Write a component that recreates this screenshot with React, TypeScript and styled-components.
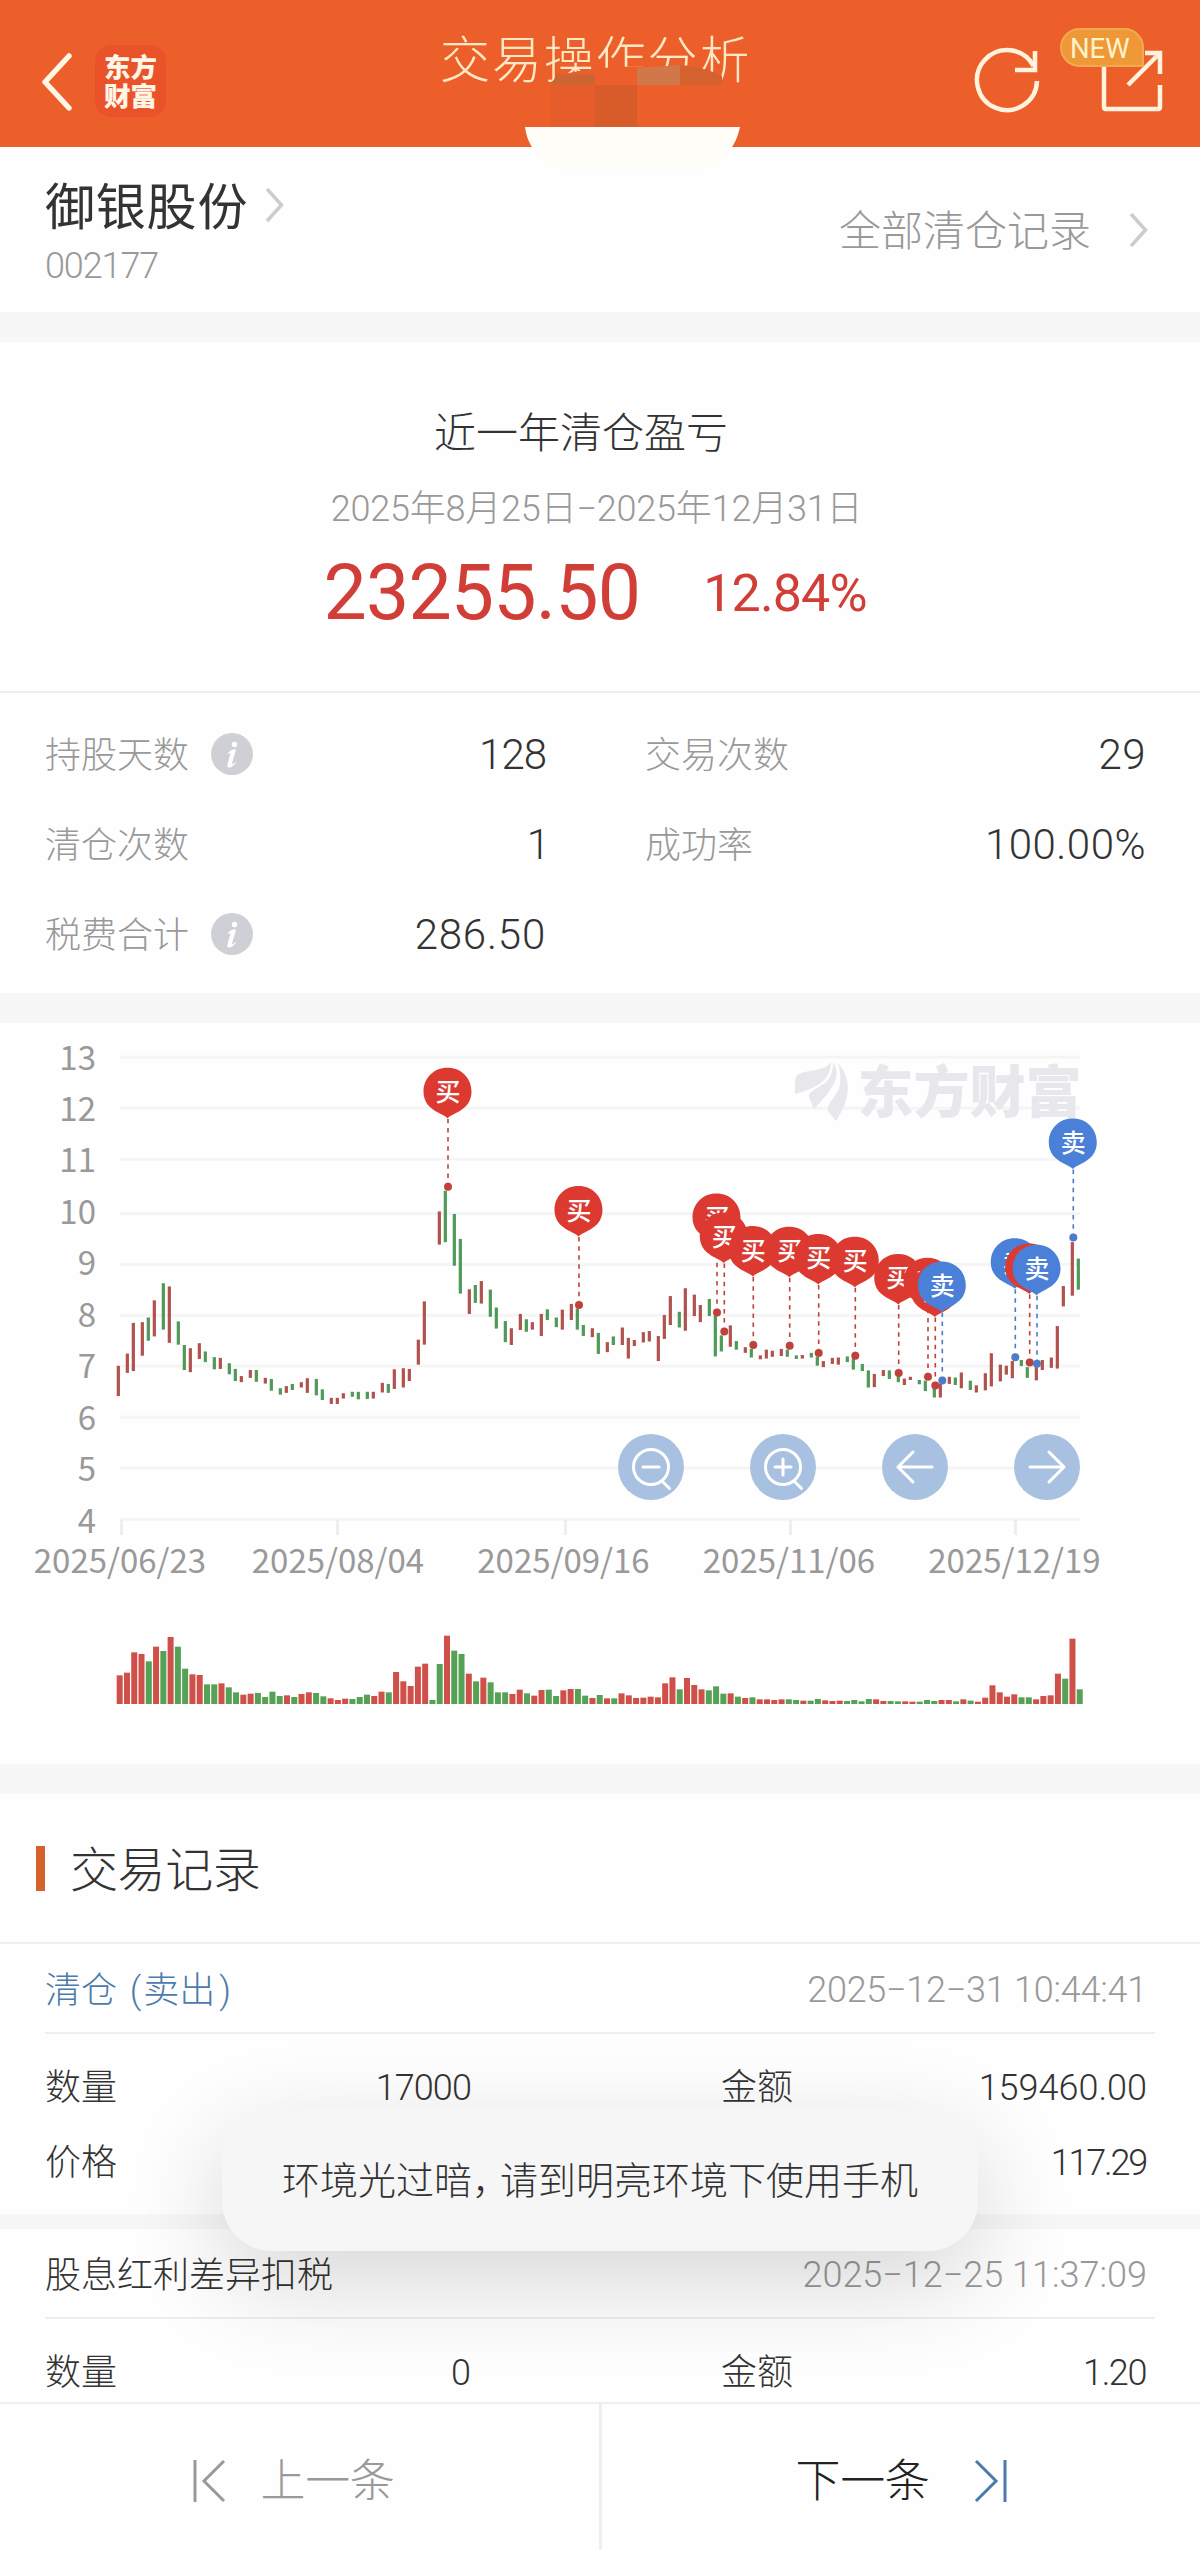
import React from "react";
import styled, { createGlobalStyle, css } from "styled-components";

const GlobalStyle = createGlobalStyle`
  * { box-sizing: border-box; }
  body { margin: 0; background: #fff; }
`;

const sans = `Roboto, "Noto Sans CJK SC Light", "Noto Sans CJK SC", sans-serif`;
const cjk = `"Noto Sans CJK SC", sans-serif`;

const Page = styled.div`
  position: relative;
  width: 1200px;
  height: 2550px;
  overflow: hidden;
  background: #fefefe;
  color: #333;
  font-family: ${sans};
  font-weight: 300;
  line-height: 1;
  white-space: nowrap;
  display: flex;
  flex-direction: column;
`;

/* ---------- header ---------- */

const Header = styled.header`
  position: relative;
  height: 147px;
  flex: none;
  background: #ec5f2b;
  display: flex;
  justify-content: space-between;
  padding: 45px 35px 0 40px;
`;

const HeaderLeft = styled.div`
  display: flex;
  align-items: center;
  height: 72px;
  gap: 20px;
`;

const HeaderRight = styled.div`
  position: relative;
  display: flex;
  gap: 57px;
`;

const Logo = styled.div`
  width: 71px;
  height: 72px;
  border-radius: 16px;
  background: #ea532a;
  color: #fff6e6;
  font-family: ${cjk};
  font-weight: 900;
  font-size: 26.5px;
  line-height: 29px;
  text-align: center;
  padding-top: 6px;
`;

const Title = styled.h1`
  position: absolute;
  left: 440px;
  top: 36px;
  margin: 0;
  font-size: 50px;
  letter-spacing: 1.9px;
  font-weight: 300;
  color: #ffe9c4;
`;

const NewBadge = styled.span`
  position: absolute;
  left: 88px;
  top: -17px;
  width: 84px;
  height: 39px;
  border: 2px solid #f4a850;
  border-radius: 20px 20px 0 20px;
  background: #ee9837;
  color: #fff3c8;
  font-size: 27.5px;
  line-height: 37px;
  font-weight: 400;
  padding-left: 8px;
`;

const Cutout = styled.svg`
  position: absolute;
  left: 500px;
  top: 60px;
`;

/* ---------- stock ---------- */

const StockRow = styled.section`
  height: 165px;
  flex: none;
  display: flex;
  justify-content: space-between;
  padding: 34px 51px 0 45px;
`;

const StockName = styled.div`
  display: flex;
  align-items: center;
  gap: 17px;
  height: 50px;
  font-size: 50px;
  letter-spacing: 0.8px;
  font-weight: 400;
`;

const NameText = styled.span`
  padding-top: 3px;
  font-family: Roboto, ${cjk};
`;

const StockCode = styled.div`
  margin-top: 17px;
  font-size: 36px;
  letter-spacing: -1.1px;
  color: #999;
`;

const AllRecords = styled.div`
  display: flex;
  align-items: center;
  height: 100px;
  gap: 38px;
  font-size: 42px;
  color: #999;
`;

const AllRecordsText = styled.span`
  padding-top: 2px;
`;

const Gap = styled.div<{ $h: number }>`
  height: ${(p) => p.$h}px;
  flex: none;
  background: #f7f7f7;
`;

/* ---------- summary ---------- */

const Summary = styled.section`
  height: 351px;
  flex: none;
  border-bottom: 2px solid #eee;
  display: flex;
  flex-direction: column;
  align-items: center;
`;

const SummaryTitle = styled.h2`
  margin: 71px 0 0 -38px;
  font-size: 42px;
  font-weight: 300;
`;

const SummaryRange = styled.div`
  margin: 36px 0 0 -7px;
  font-size: 36px;
  letter-spacing: -0.2px;
  color: #999;
`;

const SummaryFigures = styled.div`
  margin: 26px 0 0 -10px;
  display: flex;
  align-items: center;
  gap: 63px;
  height: 80px;
  color: #d03e37;
  font-weight: 400;
`;

const Profit = styled.span`
  font-size: 77px;
  letter-spacing: -0.8px;
`;

const Percent = styled.span`
  font-size: 52px;
  letter-spacing: -0.9px;
  padding-top: 1px;
`;

/* ---------- statistics ---------- */

const Stats = styled.section`
  height: 300px;
  flex: none;
  padding: 16px 54px 0 45px;
  display: grid;
  grid-template-columns: 501px 501px;
  column-gap: 99px;
  grid-auto-rows: 90px;
`;

const Stat = styled.div`
  display: flex;
  align-items: center;
`;

const StatLabel = styled.span`
  font-size: 36px;
  color: #999;
  padding-top: 3px;
`;

const StatValue = styled.span<{ $track: number }>`
  margin-left: auto;
  font-size: 42px;
  padding-top: 1px;
  letter-spacing: ${(p) => p.$track}px;
`;

const InfoIcon = styled.svg`
  margin-left: 22px;
`;

/* ---------- chart ---------- */

const ChartSection = styled.section`
  height: 741px;
  flex: none;
`;

/* ---------- records ---------- */

const RecordsTitle = styled.h2`
  margin: 0;
  height: 150px;
  flex: none;
  border-bottom: 2px solid #eee;
  display: flex;
  align-items: center;
  gap: 25px;
  padding: 0 0 0 36px;
  font-size: 48px;
  font-weight: 300;
  &::before {
    content: "";
    width: 9px;
    height: 45px;
    background: #d5622b;
  }
`;

const TitleText = styled.span`
  padding-top: 6px;
  letter-spacing: -0.4px;
`;

const RecordHead = styled.div`
  height: 90px;
  flex: none;
  margin: 0 45px;
  padding: 3px 8px 0 0;
  border-bottom: 2px solid #eee;
  display: flex;
  align-items: center;
  justify-content: space-between;
`;

const RecordName = styled.span<{ $sell?: boolean }>`
  font-size: 36px;
  padding-top: 2px;
  ${(p) => p.$sell && css`color: #4c7bab;`}
`;

const Paren = styled.span<{ $open?: boolean }>`
  ${(p) => (p.$open ? "margin: 0 2px 0 4px;" : "margin-left: 4px;")}
`;

const RecordTime = styled.span<{ $track: number }>`
  font-size: 36px;
  letter-spacing: ${(p) => p.$track}px;
  color: #999;
`;

const RecordBody = styled.div<{ $h: number }>`
  height: ${(p) => p.$h}px;
  flex: none;
  padding: 16px 53px 0 45px;
`;

const RecordRow = styled.div`
  height: 75px;
  display: grid;
  grid-template-columns: 426px 426px;
  column-gap: 250px;
  align-items: center;
  font-size: 36px;
`;

const Field = styled.div`
  display: flex;
  justify-content: space-between;
`;

const Amount = styled.span<{ $track?: number }>`
  letter-spacing: ${(p) => p.$track ?? 0}px;
  margin-right: ${(p) => (p.$track && p.$track < -1 ? 1 : 0)}px;
`;

/* ---------- footer ---------- */

const Footer = styled.nav`
  height: 148px;
  flex: none;
  border-top: 2px solid #eee;
  display: grid;
  grid-template-columns: 602px 598px;
`;

const NavButton = styled.div<{ $muted?: boolean }>`
  display: flex;
  align-items: center;
  justify-content: center;
  padding: ${(p) => (p.$muted ? "8px 13px 0 0" : "8px 0 0 2px")};
  gap: ${(p) => (p.$muted ? 33 : 43)}px;
  font-size: 45px;
  letter-spacing: -0.4px;
  color: ${(p) => (p.$muted ? "#999" : "#222")};
  ${(p) => p.$muted && css`border-right: 3px solid #eee;`}
`;

const Toast = styled.div`
  position: absolute;
  left: 222px;
  top: 2108px;
  width: 756px;
  height: 143px;
  border-radius: 50px;
  background: #f6f6f6;
  box-shadow: 0 30px 100px rgba(0, 0, 0, 0.16);
  display: flex;
  align-items: center;
  justify-content: center;
  padding-top: 3px;
  font-size: 38px;
`;

const Comma = styled.span`
  margin-right: -10px;
`;

/* ---------- chart data ---------- */

type Tone = "r" | "g";

/* x, high, low in thirds / 2.8ths of a pixel measured from the plot's top left */
const candles = `355r940-1025 382r906-960 400r820-955 427r818-912 445g805-870 463r757-858 490g709-839 508r718-876
535g816-881 553g882-952 571r891-958 598r877-921 616g900-930 643g916-950 661r918-949 688g933-964 706g949-983
724r969-986 751r952-974 769g952-985 796r974-990 814g977-1010 841g1003-1021 859r997-1016 877g991-1008 904r986-1001
922r975-1016 949g977-1023 967g1006-1036 994r1030-1047 1012r1030-1047 1030r1017-1032 1057g1013-1027 1075g1013-1034
1102g1013-1033 1120r1013-1032 1147r988-1015 1165g991-1016 1183r950-1005 1210r947-1001 1228r949-983 1255r867-937
1273r760-881 1318r508-601 1336g450-594 1363g515-660 1381g585-738 1408r726-795 1426g714-764 1444r703-766 1471g727-803
1489g777-836 1516g815-874 1534r835-882 1561r795-840 1579g810-845 1597r818-839 1624r795-857 1642g782-812 1669g805-832
1687r783-839 1714r767-812 1732g780-839 1750g826-857 1777r835-860 1795g848-907 1822r874-902 1840g858-882 1867r833-882
1885r862-920 1903r868-885 1930r846-875 1948r843-872 1975r857-927 1993r798-865 2011r745-826 2038g789-833 2056r723-842
2083r741-801 2101r770-818 2128g753-801 2146g800-914 2164g855-900 2191r827-887 2209g871-895 2236r888-904 2254g893-917
2281r911-922 2299r895-920 2317r898-915 2344r893-913 2362g895-915 2389g911-921 2407r910-920 2434g904-917 2452g915-940
2470r927-944 2497r918-935 2515r917-937 2542g914-930 2560g920-951 2587g935-955 2605g953-1001 2623r963-1000 2650r952-969
2668g953-977 2695g970-986 2713r976-994 2731r971-980 2758g980-992 2776g982-1011 2803g1004-1029 2821r991-1029
2848r971-991 2866g973-994 2884r959-1003 2911g982-1008 2929r995-1015 2956r961-1009 2974r905-998 3001r937-984
3019r940-965 3037r927-975 3064g924-941 3082g944-974 3109r944-981 3127r924-952 3154r917-946 3172r829-948 3190r717-774
3217r594-744 3235g640-727`
  .split(/\s+/)
  .map((s) => {
    const [, x, tone, hi, lo] = s.match(/(\d+)([rg])(\d+)-(\d+)/)!;
    return { x: +x / 3, tone: tone as Tone, top: 7 + +hi / 2.8, bottom: 7 + +lo / 2.8 };
  });

/* volume heights in thirds of a pixel */
const volumes = `r86 r94 r155 r150 g128 r172 g159 r201 g172 g106 r89 r87 g59 g59 r62 g50 g35 r28 r31 g33 g21 g37 g24 r26 g21
r30 r35 g33 g23 r17 r12 r16 g15 g21 g28 r24 r37 g35 r96 r68 r54 r112 r121 g12 g120 r205 g160 g150 r91 g68 r79 g65 g35 g35
r30 r43 g32 r25 r42 g43 g24 r41 r45 g45 g25 r18 g27 r17 g17 r32 r26 r18 r19 r22 r20 r62 r80 g44 r78 r57 r44 g41 g53 g31 r32
g22 r18 g20 r14 r14 r12 r14 g14 g12 r10 g10 g15 r11 r9 r10 g9 g12 g8 g15 r14 r9 g9 g8 r8 r7 g7 g12 g9 r12 r12 g8 r14 g10
r7 r19 r56 r35 r22 r29 g20 g20 r14 r24 r26 r91 g76 r196 g44`
  .split(/\s+/)
  .map((s) => ({ tone: s[0] as Tone, h: +s.slice(1) / 3 }));

/* trade markers: x, top of the pin, side */
const trades: [number, number, "buy" | "sell"][] = [
  [448, 106, "buy"],
  [579, 437, "buy"],
  [717, 458, "buy"],
  [724.3, 511, "buy"],
  [753.3, 549, "buy"],
  [789.7, 551, "buy"],
  [818.7, 571, "buy"],
  [855.3, 579, "buy"],
  [898.7, 627, "buy"],
  [928, 638, "buy"],
  [935.3, 662, "buy"],
  [942.3, 648, "sell"],
  [1015.3, 583, "sell"],
  [1029.7, 598, "buy"],
  [1037, 601, "sell"],
  [1073.3, 248, "sell"],
];

const gridLines = [76, 219, 362, 514, 656, 799, 941, 1084, 1227, 1370].map((v) => 7 + v / 2.8);
const axisDates: [number, number, string][] = [
  [121.5, 120, "2025/06/23"],
  [337.5, 338, "2025/08/04"],
  [565.5, 563.5, "2025/09/16"],
  [790.5, 789, "2025/11/06"],
  [1015.5, 1014.5, "2025/12/19"],
];

const AxisText = styled.text`
  font-family: ${cjk};
  font-size: 33px;
  font-weight: 400;
  fill: #999;
`;

const PinText = styled.text`
  font-family: ${cjk};
  font-size: 25px;
  font-weight: 500;
  fill: #fff;
  text-anchor: middle;
`;

const Watermark = styled.text`
  font-family: ${cjk};
  font-size: 56px;
  font-weight: 900;
  fill: #e7e7ec;
`;

const Chart = () => (
  <svg width="1200" height="741" viewBox="0 0 1200 741">
    {gridLines.map((y) => (
      <rect key={y} x={120} y={y - 1.5} width={960} height={3} fill="#f5f5f5" />
    ))}
    {gridLines.map((_, i) => (
      <AxisText key={i} x={96} y={46.5 + i * 51.45} textAnchor="end">
        {13 - i}
      </AxisText>
    ))}
    {axisDates.map(([tick, x, label]) => (
      <g key={label}>
        <rect x={tick - 1.5} y={497} width={3} height={15} fill="#eee" />
        <AxisText x={x} y={549.5} textAnchor="middle">
          {label}
        </AxisText>
      </g>
    ))}

    <g fill="#e7e7ec">
      <path d="M795 57C797 47 812 49 820 46C826 44 829 42 831 39C831 57 817 65 795 71Z" />
      <path d="M833 39C842 52 834 65 814 86L809 74C808 68 822 64 828 57C832 52 833 46 833 39Z" />
      <path d="M838 40C850 54 853 72 836 98L828 88C826 80 838 73 840 62C841 54 840 47 838 40Z" />
    </g>
    <Watermark x={857.5} y={89}>东方财富</Watermark>

    {candles.map((c) => (
      <rect
        key={c.x}
        x={c.x - 1.6}
        y={c.top}
        width={3.2}
        height={c.bottom - c.top}
        fill={c.tone === "r" ? "#b0524e" : "#4f9a58"}
      />
    ))}

    {trades.map(([x, top, side], i) => {
      const y = 7 + top / 2.8;
      const color = side === "buy" ? "#c0413b" : "#4c7cc8";
      return (
        <g key={i}>
          <line x1={x} x2={x} y1={y + 51} y2={y + 115} stroke={color} strokeWidth={1.6} strokeDasharray="4.5 4.6" />
          <circle cx={x} cy={y + 119} r={4} fill={color} />
        </g>
      );
    })}
    {trades.map(([x, top, side], i) => {
      const y = 7 + top / 2.8;
      return (
        <g key={i} transform={`translate(${x - 0.5} ${y})`}>
          <path
            d="M0 0C14 0 24 10.5 24 24C24 35 17 41 9 45C5 47 2 48.5 0 50.5C-2 48.5 -5 47 -9 45C-17 41 -24 35 -24 24C-24 10.5 -14 0 0 0Z"
            fill={side === "buy" ? "#dc3a31" : "#4a80d8"}
          />
          <PinText x={0.5} y={33.5}>{side === "buy" ? "买" : "卖"}</PinText>
        </g>
      );
    })}

    {[651, 783, 915, 1047].map((x, i) => (
      <g key={x} transform={`translate(${x} 444)`} fill="none" stroke="#fff" strokeWidth={3} strokeLinecap="round" strokeLinejoin="round">
        <circle r={33} fill="#a3bcde" fillOpacity={0.93} stroke="none" />
        {i < 2 && <path d="M17.5 0A17.5 17.5 0 1 1 -17.5 0A17.5 17.5 0 1 1 17.5 0M11 14L18.5 21.5M-8 0H8" />}
        {i === 1 && <path d="M0 -8V8" />}
        {i === 2 && <path d="M17 0H-17M-2 -15L-17 0L-2 15" />}
        {i === 3 && <path d="M-17 0H17M2 -15L17 0L2 15" />}
      </g>
    ))}

    {volumes.map((v, i) => (
      <rect
        key={i}
        x={116.7 + i * 7.273}
        y={681 - v.h}
        width={6}
        height={v.h}
        fill={v.tone === "r" ? "#cf4f49" : "#55a155"}
      />
    ))}
  </svg>
);

const Chevron = () => (
  <svg width="20" height="36" viewBox="0 0 20 36" fill="none" stroke="#ccc" strokeWidth="3.5">
    <path d="M2 1L16.500 17L2 33" />
  </svg>
);

const Info = () => (
  <InfoIcon width="42" height="42" viewBox="0 0 42 42">
    <circle cx="21" cy="21" r="21" fill="#cfd0d5" />
    <circle cx="23.5" cy="11.5" r="2.7" fill="#fff" />
    <path
      d="M16.5 20.5C18.5 18.2 20.5 17 22.5 16.5H25L21 30.5C21 31.8 22.5 31 24.5 29L25 29.8C22 33.5 19.5 35 17.5 34.5C16 34 16.2 32.5 16.7 30.5L19.5 20.5C19.7 19.5 18.5 20 17 21.3Z"
      fill="#fff"
    />
  </InfoIcon>
);

const StatItem = ({ label, value, info, track = 0 }: { label: string; value: string; info?: boolean; track?: number }) => (
  <Stat>
    <StatLabel>{label}</StatLabel>
    {info && <Info />}
    <StatValue $track={track}>{value}</StatValue>
  </Stat>
);

export default function App() {
  return (
    <>
      <GlobalStyle />
      <Page>
        <Header>
          <HeaderLeft>
            <svg width="35" height="60" viewBox="0 0 35 60" fill="none" stroke="#fff6e6" strokeWidth="5.5" strokeLinecap="round" strokeLinejoin="round">
              <path d="M29 5L5 31L29 57" />
            </svg>
            <Logo>
              东方
              <br />
              财富
            </Logo>
          </HeaderLeft>
          <Title>交易操作分析</Title>
          <Cutout width="260" height="112" viewBox="0 0 260 112">
            <path d="M51 22L64 14Q128 0 192 12L222 22V67H51Z" fill="#ec5f2b" />
            <path d="M57 14H95V25H51Z" fill="#cf6433" />
            <rect x="95" y="25" width="42" height="42" fill="#d85c29" />
            <rect x="51" y="25" width="44" height="42" fill="#e65c2a" />
            <path d="M137 8L180 5V25H137Z" fill="#d0784a" />
            <path d="M180 5Q202 6 222 16V25H180Z" fill="#d4622f" />
            <path d="M25 67H240C235 92 216 110 190 110H75C48 110 28 92 25 67Z" fill="#fffdf8" />
          </Cutout>
          <HeaderRight>
            <svg width="70" height="72" viewBox="0 0 70 72" fill="none" stroke="#fff3de" strokeWidth="4.5">
              <path d="M65 36A30 30 0 1 1 61.5 21" />
              <path d="M63 6V25H43" />
            </svg>
            <svg width="66" height="72" viewBox="0 0 66 72" fill="none" stroke="#fff3de" strokeWidth="4.5">
              <path d="M5 18V62Q5 64 7 64H59Q61 64 61 62V40" />
              <path d="M29 40L60 9M46 8H61V29" />
            </svg>
            <NewBadge>NEW</NewBadge>
          </HeaderRight>
        </Header>

        <StockRow>
          <div>
            <StockName>
              <NameText>御银股份</NameText>
              <Chevron />
            </StockName>
            <StockCode>002177</StockCode>
          </div>
          <AllRecords>
            <AllRecordsText>全部清仓记录</AllRecordsText>
            <Chevron />
          </AllRecords>
        </StockRow>
        <Gap $h={30} />

        <Summary>
          <SummaryTitle>近一年清仓盈亏</SummaryTitle>
          <SummaryRange>2025年8月25日−2025年12月31日</SummaryRange>
          <SummaryFigures>
            <Profit>23255.50</Profit>
            <Percent>12.84%</Percent>
          </SummaryFigures>
        </Summary>

        <Stats>
          <StatItem label="持股天数" value="128" info track={-1} />
          <StatItem label="交易次数" value="29" track={0.5} />
          <StatItem label="清仓次数" value="1" track={-4} />
          <StatItem label="成功率" value="100.00%" track={0.5} />
          <StatItem label="税费合计" value="286.50" info track={0.8} />
        </Stats>
        <Gap $h={30} />

        <ChartSection>
          <Chart />
        </ChartSection>
        <Gap $h={30} />

        <RecordsTitle>
          <TitleText>交易记录</TitleText>
        </RecordsTitle>
        <RecordHead>
          <RecordName $sell>
            清仓<Paren $open> (</Paren>卖出<Paren>)</Paren>
          </RecordName>
          <RecordTime $track={-0.25}>2025−12−31 10:44:41</RecordTime>
        </RecordHead>
        <RecordBody $h={180}>
          <RecordRow>
            <Field><span>数量</span><Amount $track={-0.9}>17000</Amount></Field>
            <Field><span>金额</span><Amount>159460.00</Amount></Field>
          </RecordRow>
          <RecordRow>
            <Field><span>价格</span></Field>
            <Field><span /><Amount $track={-2.2}>117.29</Amount></Field>
          </RecordRow>
        </RecordBody>
        <Gap $h={15} />
        <RecordHead>
          <RecordName>股息红利差异扣税</RecordName>
          <RecordTime $track={0}>2025−12−25 11:37:09</RecordTime>
        </RecordHead>
        <RecordBody $h={83}>
          <RecordRow>
            <Field><span>数量</span><Amount>0</Amount></Field>
            <Field><span>金额</span><Amount $track={-1.4}>1.20</Amount></Field>
          </RecordRow>
        </RecordBody>

        <Footer>
          <NavButton $muted>
            <svg width="36" height="44" viewBox="0 0 36 44" fill="none" stroke="#999" strokeWidth="3">
              <path d="M3 1V43M32 2L12 22L32 42" />
            </svg>
            上一条
          </NavButton>
          <NavButton>
            下一条
            <svg width="36" height="44" viewBox="0 0 36 44" fill="none" stroke="#4c7bab" strokeWidth="3">
              <path d="M33 1V43M4 2L24 22L4 42" />
            </svg>
          </NavButton>
        </Footer>

        <Toast>
          <span>
            环境光过暗<Comma>，</Comma>请到明亮环境下使用手机
          </span>
        </Toast>
      </Page>
    </>
  );
}
